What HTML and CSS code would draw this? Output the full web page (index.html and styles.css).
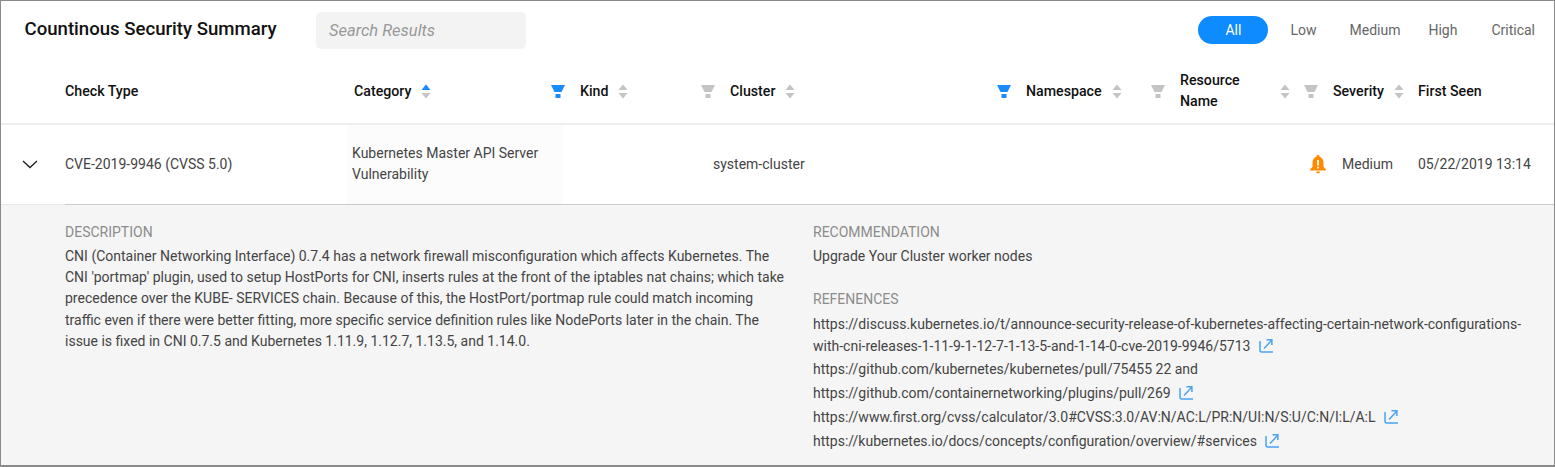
FILE: index.html
```html
<!DOCTYPE html>
<html lang="en">
<head>
<meta charset="utf-8">
<title>Countinous Security Summary</title>
<link rel="stylesheet" href="styles.css">
</head>
<body>
<svg class="defs" width="0" height="0" aria-hidden="true">
  <symbol id="sort" viewBox="0 0 10 15"><path d="M5 .5 9.500 6H.5z"/><path d="M.5 9h9L5 14.500z"/></symbol>
  <symbol id="sort-asc" viewBox="0 0 10 15"><path fill="#1a8cff" d="M5 .5 9.500 6H.5z"/><path fill="#c4c4c4" d="M.5 9h9L5 14.500z"/></symbol>
  <symbol id="filter" viewBox="0 0 14 13"><path d="M0 0h14l-3.500 7h-7z"/><path d="M4.500 9h5v4h-5z"/></symbol>
  <symbol id="ext" viewBox="0 0 15 15"><path d="M1 3v9.500a1.500 1.500 0 0 0 1.500 1.500H14" fill="none" stroke="currentColor" stroke-width="1.500"/><path d="M5 10.500 12.500 2.500M7.500 1.800h5.400v5.200" fill="none" stroke="currentColor" stroke-width="1.500"/></symbol>
</svg>
<main class="panel">
  <header class="top">
    <h1 class="title">Countinous Security Summary</h1>
    <div class="search">Search Results</div>
    <nav class="levels">
      <span class="level active">All</span>
      <span class="level low">Low</span>
      <span class="level medium">Medium</span>
      <span class="level high">High</span>
      <span class="level critical">Critical</span>
    </nav>
  </header>

  <div class="thead">
    <div class="th"></div>
    <div class="th"><span>Check Type</span></div>
    <div class="th"><span>Category</span><svg class="sort"><use href="#sort-asc"/></svg><svg class="filter on"><use href="#filter"/></svg></div>
    <div class="th"><span>Kind</span><svg class="sort"><use href="#sort"/></svg><svg class="filter"><use href="#filter"/></svg></div>
    <div class="th"><span>Cluster</span><svg class="sort"><use href="#sort"/></svg><svg class="filter on"><use href="#filter"/></svg></div>
    <div class="th"><span>Namespace</span><svg class="sort"><use href="#sort"/></svg><svg class="filter"><use href="#filter"/></svg></div>
    <div class="th"><span class="wrapname">Resource Name</span><svg class="sort pushed"><use href="#sort"/></svg><svg class="filter near"><use href="#filter"/></svg></div>
    <div class="th"><span>Severity</span><svg class="sort"><use href="#sort"/></svg></div>
    <div class="th"><span>First Seen</span></div>
  </div>

  <div class="row">
    <div class="td chevron"><svg width="16" height="9" viewBox="0 0 16 9"><path d="M1 1l7 6.500L15 1" fill="none" stroke="#222" stroke-width="1.400"/></svg></div>
    <div class="td">CVE-2019-9946 (CVSS 5.0)</div>
    <div class="td category">Kubernetes Master API Server Vulnerability</div>
    <div class="td"></div>
    <div class="td">system-cluster</div>
    <div class="td severity">
      <svg class="bell" width="16" height="19" viewBox="0 0 16 19"><path fill="#ff8a00" d="M8 0a1.500 1.500 0 0 1 1.500 1.700C12 2.500 13.500 4.700 13.500 7.500v4.300L16 14.500v1H0v-1l2.500-2.700V7.500c0-2.800 1.500-5 4-5.800A1.500 1.500 0 0 1 8 0zM6 16.500h4a2 2 0 0 1-4 0z"/><path fill="#fff" d="M7.100 5h1.800v5.500H7.100zM7.100 11.700h1.800v1.800H7.100z"/></svg>
      <span>Medium</span>
    </div>
    <div class="td date">05/22/2019 13:14</div>
  </div>

  <section class="details">
    <div class="col-desc">
      <h2 class="label">DESCRIPTION</h2>
      <p class="body">CNI (Container Networking Interface) 0.7.4 has a network firewall misconfiguration which affects Kubernetes. The CNI 'portmap' plugin, used to setup HostPorts for CNI, inserts rules at the front of the iptables nat chains; which take precedence over the KUBE- SERVICES chain. Because of this, the HostPort/portmap rule could match incoming traffic even if there were better fitting, more specific service definition rules like NodePorts later in the chain. The issue is fixed in CNI 0.7.5 and Kubernetes 1.11.9, 1.12.7, 1.13.5, and 1.14.0.</p>
    </div>
    <div class="col-rec">
      <h2 class="label">RECOMMENDATION</h2>
      <p class="body rec">Upgrade Your Cluster worker nodes</p>
      <h2 class="label refs">REFENENCES</h2>
      <ul class="links">
        <li class="first">https://discuss.kubernetes.io/t/announce-security-release-of-kubernetes-affecting-certain-network-configurations-with-cni-releases-1-11-9-1-12-7-1-13-5-and-1-14-0-cve-2019-9946/5713 <svg class="ext"><use href="#ext"/></svg></li>
        <li class="plain">https://github.com/kubernetes/kubernetes/pull/75455 22 and</li>
        <li>https://github.com/containernetworking/plugins/pull/269 <svg class="ext"><use href="#ext"/></svg></li>
        <li>https://www.first.org/cvss/calculator/3.0#CVSS:3.0/AV:N/AC:L/PR:N/UI:N/S:U/C:N/I:L/A:L <svg class="ext"><use href="#ext"/></svg></li>
        <li>https://kubernetes.io/docs/concepts/configuration/overview/#services <svg class="ext"><use href="#ext"/></svg></li>
      </ul>
    </div>
  </section>
</main>
</body>
</html>
```
FILE: styles.css
```css
* { box-sizing: border-box; }
html, body { margin: 0; padding: 0; }
body { width: 1555px; height: 467px; overflow: hidden; font-family: Roboto, "Liberation Sans", sans-serif; background: #fff; }
.defs { position: absolute; }
.panel { width: 1555px; height: 467px; border: 1px solid #8a8a8a; border-bottom-width: 2px; display: flex; flex-direction: column; overflow: hidden; background: #fff; }

.top { height: 59px; display: flex; align-items: flex-start; padding: 11px 0 0 23.500px; flex: none; }
.title { margin: 6px 0 0; width: 291.500px; font-size: 18.600px; line-height: 22px; font-weight: 500; color: #111; white-space: nowrap; }
.search { width: 210px; height: 37px; background: #f3f3f3; border-radius: 5px; padding-left: 13px; font-size: 16.500px; line-height: 37px; font-style: italic; color: #999; }
.levels { margin-left: auto; display: flex; align-items: center; height: 28px; margin-top: 4px; font-size: 14px; color: #666; }
.level { display: block; text-align: center; }
.level.active { width: 70px; height: 28px; line-height: 28px; border-radius: 14px; background: #0d8bff; color: #fff; }
.low { margin-left: 22px; }
.medium { margin-left: 33px; }
.high { margin-left: 28px; }
.critical { margin-left: 34px; margin-right: 19px; }

.thead { height: 65px; flex: none; display: grid; grid-template-columns: 64px 289px 226px 150px 296px 154px 153px 85px 1fr; border-bottom: 2px solid #eee; }
.th { display: flex; align-items: center; font-size: 14.200px; line-height: 21px; font-weight: 500; color: #111; padding: 0 15px 1px 0; }
.wrapname { width: 60px; }
.sort { width: 10px; height: 15px; margin-left: 10px; fill: #c4c4c4; flex: none; }
.filter { width: 14px; height: 13px; margin-left: auto; fill: #c4c4c4; flex: none; }
.filter.on { fill: #1a8cff; }
.pushed { margin-left: auto; }
.near { margin-left: 14px; }

.row { height: 80px; flex: none; display: grid; grid-template-columns: 64px 281px 216px 151px 597px 108px 1fr; font-size: 14px; color: #444; }
.td { display: flex; align-items: center; line-height: 21px; border-bottom: 1px solid #ccc; }
.chevron { padding: 0 0 0 21px; border-bottom-color: #e8e8e8; }
.category { background: #fcfcfc; padding: 0 6px 1px; }
.severity { gap: 16px; }

.details { flex: 1; background: #f5f5f5; display: flex; padding: 19px 0 0 64px; }
.col-desc { width: 748px; flex: none; }
.col-rec { flex: 1; }
.label { margin: 0; font-size: 14px; line-height: 17px; font-weight: 400; color: #8c8c8c; }
.body { margin: 5px 0 0; font-size: 14px; line-height: 21.200px; color: #444; }
.col-desc .body { width: 722px; }
.refs { margin-top: 24px; }
.links { list-style: none; margin: 5px 0 0; padding: 0 20px 0 0; font-size: 14px; line-height: 23.800px; color: #444; }
.links .first { line-height: 22px; margin-bottom: 1px; }
.ext { width: 15px; height: 15px; margin-left: 5px; vertical-align: -2px; color: #4aa3f5; }
```
